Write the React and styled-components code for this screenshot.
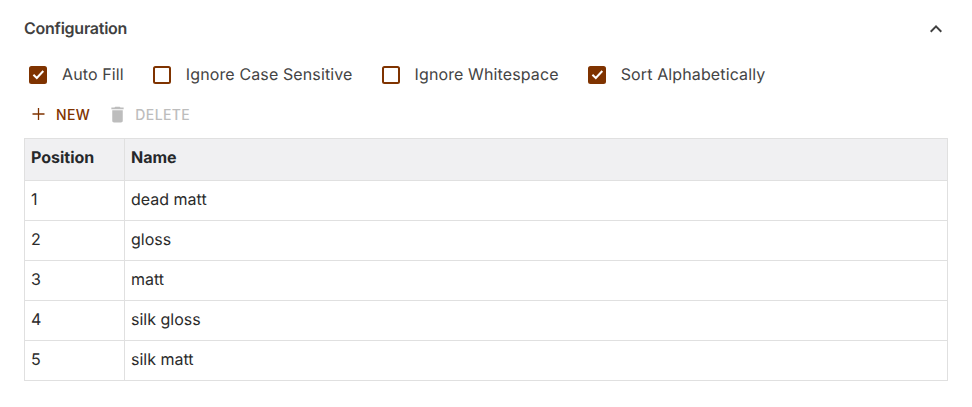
import React from "react";
import styled, { createGlobalStyle } from "styled-components";

const Global = createGlobalStyle`
  html, body { margin: 0; padding: 0; background: #fff; }
  body { font-family: Inter, "Liberation Sans", sans-serif; text-rendering: geometricPrecision; }
`;

const Panel = styled.section`
  width: 972px;
  height: 407px;
  box-sizing: border-box;
  padding: 0 24px;
  overflow: hidden;
`;

const Header = styled.header`
  height: 57px;
  display: flex;
  align-items: center;
  justify-content: space-between;
`;

const Title = styled.h2`
  margin: 0 0 1px;
  font-size: 16px;
  font-weight: 600;
  letter-spacing: -0.25px;
  color: #404040;
`;

const Chevron = styled.svg`
  width: 24px;
  height: 24px;
  fill: #404040;
`;

const Options = styled.div`
  display: flex;
  height: 36px;
  align-items: center;
  padding-left: 5px;
  gap: 29px;
  margin-top: -1px;
`;

const Option = styled.label`
  display: flex;
  align-items: center;
  gap: 15px;
  font-size: 16px;
  letter-spacing: 0.12px;
  color: #444;
`;

const Box = styled.span`
  box-sizing: border-box;
  width: 18px;
  height: 18px;
  margin-top: 2px;
  border-radius: 2.5px;
  border: 2px solid #7f3300;
  background: ${(p) => (p.$checked ? "#7f3300" : "#fff")};
  display: flex;
  align-items: center;
  justify-content: center;
`;

const Toolbar = styled.div`
  display: flex;
  align-items: center;
  height: 36px;
  margin-top: 4px;
  margin-bottom: 6px;
`;

const ToolButton = styled.button`
  display: flex;
  align-items: center;
  gap: ${(p) => (p.disabled ? "7px" : "8px")};
  padding: 0 0 0 ${(p) => (p.disabled ? "0" : "6px")};
  margin-right: 17px;
  border: 0;
  background: none;
  font: 500 14px Inter, "Liberation Sans", sans-serif;
  letter-spacing: 0.4px;
  color: ${(p) => (p.disabled ? "#bdbdbd" : "#7f3300")};
`;

const Table = styled.table`
  width: 100%;
  border-collapse: collapse;
  table-layout: fixed;
  font-size: 16px;
  color: #2b2b2b;
`;

const Th = styled.th`
  height: 42px;
  box-sizing: border-box;
  padding: 0 6px 5px;
  background: #f0f0f2;
  border: 1px solid #e0e0e0;
  text-align: left;
  font-weight: 700;
  color: #26282b;
  width: ${(p) => p.$width || "auto"};
`;

const Td = styled.td`
  height: 40px;
  box-sizing: border-box;
  padding: 0 6px 3px;
  border: 1px solid #e0e0e0;
`;

const Check = () => (
  <svg width="14" height="14" viewBox="0 0 14 14" fill="none">
    <path d="M2.4 6.8 5.8 10 12.3 3" stroke="#fff" strokeWidth="2" />
  </svg>
);

const options = [
  ["Auto Fill", true],
  ["Ignore Case Sensitive", false],
  ["Ignore Whitespace", false],
  ["Sort Alphabetically", true],
];

const rows = ["dead matt", "gloss", "matt", "silk gloss", "silk matt"];

export default function App() {
  return (
    <Panel>
      <Global />
      <Header>
        <Title>Configuration</Title>
        <Chevron viewBox="0 0 24 24">
          <path d="M12 8l-6 6 1.41 1.41L12 10.83l4.59 4.58L18 14z" />
        </Chevron>
      </Header>
      <Options>
        {options.map(([label, checked]) => (
          <Option key={label}>
            <Box $checked={checked}>{checked && <Check />}</Box>
            {label}
          </Option>
        ))}
      </Options>
      <Toolbar>
        <ToolButton>
          <svg width="18" height="18" viewBox="0 0 18 18" fill="none">
            <path d="M8.5 3v12M2.5 9h12" stroke="#7f3300" strokeWidth="1.3" />
          </svg>
          NEW
        </ToolButton>
        <ToolButton disabled>
          <svg width="21" height="21" viewBox="0 0 24 24" fill="#bdbdbd">
            <path d="M6 19c0 1.1.9 2 2 2h8c1.1 0 2-.9 2-2V7H6zM19 4h-3.5l-1-1h-5l-1 1H5v2h14z" />
          </svg>
          DELETE
        </ToolButton>
      </Toolbar>
      <Table>
        <thead>
          <tr>
            <Th $width="100px">Position</Th>
            <Th>Name</Th>
          </tr>
        </thead>
        <tbody>
          {rows.map((name, i) => (
            <tr key={name}>
              <Td>{i + 1}</Td>
              <Td>{name}</Td>
            </tr>
          ))}
        </tbody>
      </Table>
    </Panel>
  );
}
